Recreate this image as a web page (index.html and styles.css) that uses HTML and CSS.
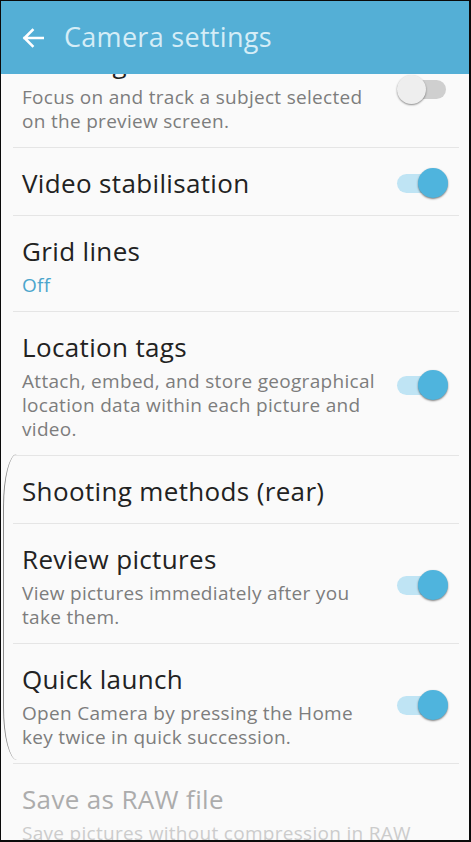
FILE: index.html
```html
<!DOCTYPE html>
<html>
<head>
<meta charset="utf-8">
<link rel="stylesheet" href="styles.css">
</head>
<body>
<div class="frame">
  <header class="appbar">
    <svg class="back" width="22" height="20" viewBox="0 0 22 20"><path d="M21 10H2.5M10.5 2L2.5 10L10.5 18" fill="none" stroke="#ffffff" stroke-width="2.6" stroke-linecap="square"/></svg>
    <h1 class="title">Camera settings</h1>
  </header>
  <div class="viewport">
    <ul class="list">
      <li class="row">
        <div class="text">
          <div class="name">Tracking AF</div>
          <div class="desc">Focus on and track a subject selected on the preview screen.</div>
        </div>
        <span class="toggle"></span>
      </li>
      <li class="row">
        <div class="text"><div class="name">Video stabilisation</div></div>
        <span class="toggle on"></span>
      </li>
      <li class="row">
        <div class="text">
          <div class="name">Grid lines</div>
          <div class="value">Off</div>
        </div>
      </li>
      <li class="row">
        <div class="text">
          <div class="name">Location tags</div>
          <div class="desc">Attach, embed, and store geographical location data within each picture and video.</div>
        </div>
        <span class="toggle on"></span>
      </li>
      <li class="row">
        <div class="text"><div class="name">Shooting methods (rear)</div></div>
      </li>
      <li class="row">
        <div class="text">
          <div class="name">Review pictures</div>
          <div class="desc">View pictures immediately after you take them.</div>
        </div>
        <span class="toggle on"></span>
      </li>
      <li class="row">
        <div class="text">
          <div class="name">Quick launch</div>
          <div class="desc">Open Camera by pressing the Home key twice in quick succession.</div>
        </div>
        <span class="toggle on"></span>
      </li>
      <li class="row disabled">
        <div class="text">
          <div class="name">Save as RAW file</div>
          <div class="desc">Save pictures without compression in RAW format.</div>
        </div>
      </li>
    </ul>
    <div class="edge"></div>
  </div>
</div>
</body>
</html>
```
FILE: styles.css
```css
* { box-sizing: border-box; }
html, body { margin: 0; padding: 0; background: #000; }
body { width: 471px; height: 842px; overflow: hidden; font-family: "Open Sans", "Noto Sans", sans-serif; }
.frame {
  width: 471px; height: 842px;
  border-style: solid; border-color: #0a0a0a;
  border-width: 1px 2px 2px 1px;
  background: #fafafa;
  display: flex; flex-direction: column;
  overflow: hidden;
}
.appbar {
  position: relative; z-index: 2;
  flex: 0 0 73px; height: 73px;
  background: #54afd6;
  display: flex; align-items: center;
  padding-left: 21px;
}
.back { display: block; margin-top: 0; }
.title {
  margin: 0 0 0 20px;
  font-weight: 400; font-size: 27px;
  color: #d5edf7;
  letter-spacing: 0.3px;
  line-height: 1;
  padding-bottom: 3px;
}
.viewport { position: relative; flex: 1; overflow: hidden; }
.list { list-style: none; margin: -46px 0 0 0; padding: 0; }
.row {
  margin: 0 10px 0 12px;
  padding: 17px 0 14px 9px;
  border-bottom: 1px solid #e5e5e5;
  display: flex; align-items: center;
}
.text { flex: 1; min-width: 0; padding-right: 8px; }
.name { font-size: 26px; line-height: 36px; color: #222222; letter-spacing: 0.35px; }
.desc { font-size: 19px; line-height: 24px; color: #7d7d7d; margin-top: 4px; letter-spacing: 0.3px; }
.value { font-size: 19px; line-height: 24px; color: #4aa5cc; margin-top: 4px; letter-spacing: 0.3px; }
.disabled .name { color: #acacac; }
.disabled .desc { color: #cccccc; }
.toggle {
  position: relative;
  flex: 0 0 51px; width: 51px; height: 31px;
  margin-right: 11px;
}
.toggle::before {
  content: ""; position: absolute;
  left: 0; right: 2px; top: 6px; height: 19px;
  border-radius: 10px; background: #cfcfcf;
}
.toggle::after {
  content: ""; position: absolute;
  left: 0; top: 1px; width: 29px; height: 29px;
  border-radius: 50%; background: #eeeeee;
  box-shadow: 0 1px 2px rgba(0,0,0,0.45);
}
.toggle.on::before { background: #bfe4f4; }
.toggle.on::after { left: auto; right: 0; top: 0; width: 30px; height: 30px; background: #4fb4dd; box-shadow: 0 1px 2px rgba(0,0,0,0.5); }
.edge {
  position: absolute; left: 2px; top: 380px;
  width: 14px; height: 306px;
  border-left: 1px solid #8a8a8a;
  border-radius: 40px 0 0 40px / 150px 0 0 150px;
}
```
